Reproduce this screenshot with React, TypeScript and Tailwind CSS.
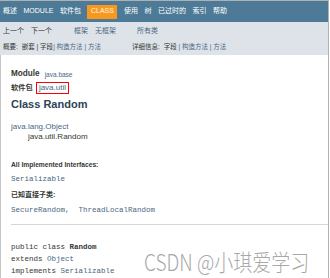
import React from "react";

const sans = { fontFamily: '"Liberation Sans", "Noto Sans CJK SC", Arial, sans-serif' };
const mono = { fontFamily: '"Liberation Mono", "Noto Sans CJK SC", monospace' };

export default function App() {
  return (
    <div className="relative w-[330px] h-[278px] overflow-hidden bg-white" style={sans}>
      <div className="w-[329px] h-[278px] border-t border-r border-[#b0b0b0] flex flex-col">
        {/* top nav */}
        <div className="h-[21px] bg-[#4D7A97] flex items-center pl-[3px] gap-[6.5px] text-[7px] text-white shrink-0">
          <span>概述</span>
          <span>MODULE</span>
          <span>软件包</span>
          <span className="bg-[#F8981D] h-[14px] px-[3.5px] flex items-center text-[#fff6e8]">CLASS</span>
          <span>使用</span>
          <span>树</span>
          <span>已过时的</span>
          <span>索引</span>
          <span>帮助</span>
        </div>
        {/* sub nav */}
        <div className="h-[33px] bg-[#DEE3E9] shrink-0 text-[7px] text-[#353833] pl-[3px] pt-[4px]">
          <div className="flex items-center h-[11px]">
            <span>上一个</span>
            <span className="ml-[7px]">下一个</span>
            <span className="ml-[22px] text-[#4A6782]">框架</span>
            <span className="ml-[7px] text-[#4A6782]">无框架</span>
            <span className="ml-[21px] text-[#4A6782]">所有类</span>
          </div>
          <div className="flex items-center h-[11px] mt-[4px] text-[6.5px]">
            <span>概要:</span>
            <span className="ml-[4px]">嵌套 | 字段 </span>
            <span className="text-[#4A6782] whitespace-pre">| 构造方法 | 方法</span>
            <span className="ml-[31px]">详细信息:</span>
            <span className="ml-[4px] whitespace-pre">字段 </span>
            <span className="text-[#4A6782] whitespace-pre">| 构造方法 | 方法</span>
          </div>
        </div>
        {/* content */}
        <div className="flex-1 border-l border-[#c4c4c4] pl-[10px] pt-[13px] text-[#353833]">
          <div className="h-[13px] flex items-center">
            <span className="text-[8.2px] font-bold">Module</span>
            <span className="ml-[5px] text-[6.5px] text-[#4A6782]">java.base</span>
          </div>
          <div className="h-[14px] flex items-center">
            <span className="text-[7.3px] font-bold">软件包</span>
            <span className="ml-[3px] text-[8px] text-[#4A6782] border-[1.5px] border-[#ff0000] px-[2px] h-[12px] flex items-center">java.util</span>
          </div>
          <div className="h-[16px] mt-[1px] flex items-center text-[11px] font-bold text-[#2c4557]">Class Random</div>
          <div className="h-[10px] mt-[10px] flex items-center text-[8px] text-[#4A6782]">java.lang.Object</div>
          <div className="h-[10px] flex items-center text-[8px] pl-[17px]">java.util.Random</div>
          <div className="h-[10px] mt-[18px] flex items-center text-[6.7px] font-bold">All Implemented Interfaces:</div>
          <div className="h-[10px] mt-[5px] flex items-center text-[7.5px] text-[#4A6782]" style={mono}>Serializable</div>
          <div className="h-[10px] mt-[5px] flex items-center text-[7px] font-bold">已知直接子类:</div>
          <div className="h-[10px] mt-[6px] flex items-center text-[7.5px] text-[#4A6782] whitespace-pre" style={mono}>SecureRandom,  ThreadLocalRandom</div>
          <div className="mt-[8px] border-t border-[#d6d6d6]" />
          <div className="mt-[16px] text-[7.5px] leading-[12px]" style={mono}>
            <div>public class <span className="font-bold">Random</span></div>
            <div>extends <span className="text-[#4A6782]">Object</span></div>
            <div>implements <span className="text-[#4A6782]">Serializable</span></div>
          </div>
        </div>
      </div>
      <div
        className="absolute left-[144px] top-[245px] text-[19px] font-extralight text-[#a8a8a8] whitespace-nowrap scale-y-[1.2] origin-top"
        style={{ fontFamily: '"Noto Sans CJK SC", sans-serif', textShadow: "0 0 1px rgba(255,255,255,0.8)" }}
      >
        CSDN @小琪爱学习
      </div>
    </div>
  );
}
